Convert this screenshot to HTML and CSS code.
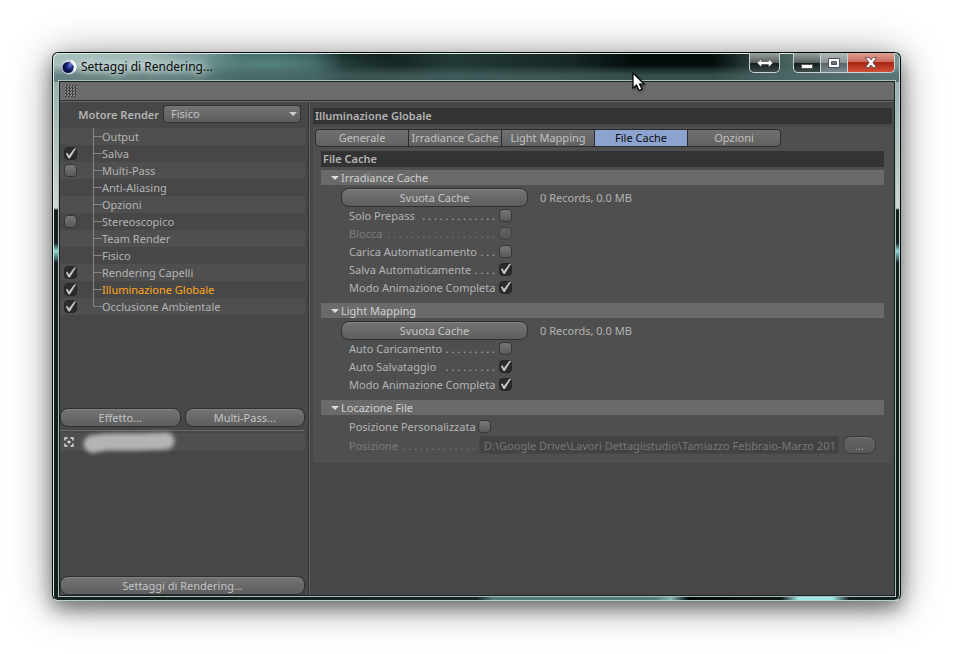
FILE: index.html
```html
<!DOCTYPE html>
<html lang="it">
<head>
  <meta charset="UTF-8" />
  <meta name="viewport" content="width=device-width, initial-scale=1" />
  <title>Settaggi di Rendering...</title>
  <link rel="stylesheet" href="styles.css">
</head>
<body>
  <div class="window">
    <header class="titlebar">
      <svg class="app-icon" viewBox="0 0 16 16" aria-hidden="true">
        <defs>
          <radialGradient id="ball" cx="0.6" cy="0.35" r="0.7">
            <stop offset="0" stop-color="#6f86e0" />
            <stop offset="0.4" stop-color="#26348f" />
            <stop offset="1" stop-color="#070a33" />
          </radialGradient>
        </defs>
        <circle cx="8" cy="8" r="7.5" fill="#c9d0de" />
        <path d="M10 0.800A7.500 7.500 0 0 1 14 12.500L11 10Z" fill="#f4f6fa" />
        <circle cx="7" cy="8.500" r="5.500" fill="#0c1148" />
        <circle cx="8" cy="8" r="4.500" fill="url(#ball)" />
        <path d="M8 4.500Q11.500 3.500 12.500 6.500Q10.500 5 8 4.500Z" fill="#dfe6ff" />
      </svg>
      <h1 class="title">Settaggi di Rendering...</h1>
      <div class="window-buttons">
        <button class="win-btn resize" aria-label="Ridimensiona">
          <svg width="18" height="10" viewBox="0 0 18 10"><path d="M1 5L5.500 1V3.500H12.500V1L17 5L12.500 9V6.500H5.500V9Z" fill="#fff" stroke="#444" stroke-width="0.6" /></svg>
        </button>
        <div class="win-group">
          <button class="win-btn minimize" aria-label="Riduci a icona">
            <svg width="12" height="12" viewBox="0 0 12 12"><rect x="0.500" y="7.500" width="11" height="4" fill="#fff" stroke="#555" /></svg>
          </button>
          <button class="win-btn maximize" aria-label="Ingrandisci">
            <svg width="12" height="10" viewBox="0 0 12 10"><path d="M0.500 0.500H11.500V9.500H0.500ZM3.500 3.500V6.500H8.500V3.500Z" fill="#fff" fill-rule="evenodd" stroke="#4b505c" /></svg>
          </button>
          <button class="win-btn close" aria-label="Chiudi">
            <svg width="12" height="11" viewBox="0 0 12 11"><path d="M0.500 0.500H4L6 3L8 0.500H11.500L8 5.500L11.500 10.500H8L6 8L4 10.500H0.500L4 5.500Z" fill="#fff" stroke="#5a4545" stroke-width="0.8" /></svg>
          </button>
        </div>
      </div>
    </header>

    <main class="content">
      <div class="toolbar">
        <div class="grip"></div>
      </div>

      <div class="columns">
        <aside class="sidebar">
          <div class="engine">
            <label for="engine">Motore Render</label>
            <div class="select-wrap">
              <select id="engine">
                <option>Fisico</option>
              </select>
            </div>
          </div>

          <ul class="tree">
            <li><span class="state"></span><span class="name">Output</span></li>
            <li><span class="state"><input type="checkbox" id="salva" checked></span><label class="name" for="salva">Salva</label></li>
            <li><span class="state"><input type="checkbox" id="multipass"></span><label class="name" for="multipass">Multi-Pass</label></li>
            <li><span class="state"></span><span class="name">Anti-Aliasing</span></li>
            <li><span class="state"></span><span class="name">Opzioni</span></li>
            <li><span class="state"><input type="checkbox" id="stereo"></span><label class="name" for="stereo">Stereoscopico</label></li>
            <li><span class="state"></span><span class="name">Team Render</span></li>
            <li><span class="state"></span><span class="name">Fisico</span></li>
            <li><span class="state"><input type="checkbox" id="capelli" checked></span><label class="name" for="capelli">Rendering Capelli</label></li>
            <li class="selected"><span class="state"><input type="checkbox" id="gi" checked></span><label class="name" for="gi">Illuminazione Globale</label></li>
            <li><span class="state"><input type="checkbox" id="ao" checked></span><label class="name" for="ao">Occlusione Ambientale</label></li>
          </ul>

          <div class="side-buttons">
            <button class="pill">Effetto...</button>
            <button class="pill">Multi-Pass...</button>
          </div>

          <div class="presets">
            <div class="preset">
              <svg width="10" height="10" viewBox="0 0 10 10" aria-hidden="true"><path d="M1 3.500V1H3.500M6.500 1H9V3.500M9 6.500V9H6.500M3.500 9H1V6.500M5 3.500V6.500M3.500 5H6.500" fill="none" stroke="#e6e6e6" stroke-width="1.300" /></svg>
              <svg class="smudge" width="106" height="28" viewBox="0 0 106 28" aria-hidden="true">
                <path d="M16 16L30 14L60 14L90 13" fill="none" stroke="#b4b4b4" stroke-width="17" stroke-linecap="round" stroke-linejoin="round" />
                <circle cx="17" cy="18" r="7" fill="#b4b4b4" />
              </svg>
            </div>
          </div>

          <button class="pill">Settaggi di Rendering...</button>
        </aside>

        <section class="settings">
          <h2 class="bar">Illuminazione Globale</h2>

          <div class="panel">
            <div class="tabs" role="tablist">
              <button role="tab" aria-selected="false">Generale</button>
              <button role="tab" aria-selected="false">Irradiance Cache</button>
              <button role="tab" aria-selected="false">Light Mapping</button>
              <button role="tab" aria-selected="true">File Cache</button>
              <button role="tab" aria-selected="false">Opzioni</button>
            </div>

            <div class="groups">
              <h3 class="bar">File Cache</h3>

              <details open>
                <summary>Irradiance Cache</summary>
                <div class="action">
                  <button class="pill">Svuota Cache</button>
                  <span>0 Records, 0.0 MB</span>
                </div>
                <div class="field">
                  <label for="prepass">Solo Prepass</label>
                  <span class="leader">. . . . . . . . . . . . .</span>
                  <input type="checkbox" id="prepass">
                </div>
                <div class="field disabled">
                  <label for="blocca">Blocca</label>
                  <span class="leader">. . . . . . . . . . . . . . . . . . .</span>
                  <input type="checkbox" id="blocca" disabled>
                </div>
                <div class="field">
                  <label for="carica">Carica Automaticamento</label>
                  <span class="leader">. . .</span>
                  <input type="checkbox" id="carica">
                </div>
                <div class="field">
                  <label for="salva-auto">Salva Automaticamente</label>
                  <span class="leader">. . . .</span>
                  <input type="checkbox" id="salva-auto" checked>
                </div>
                <div class="field">
                  <label for="modo-ic">Modo Animazione Completa</label>
                  <input type="checkbox" id="modo-ic" checked>
                </div>
              </details>

              <details open>
                <summary>Light Mapping</summary>
                <div class="action">
                  <button class="pill">Svuota Cache</button>
                  <span>0 Records, 0.0 MB</span>
                </div>
                <div class="field">
                  <label for="auto-car">Auto Caricamento</label>
                  <span class="leader">. . . . . . . . .</span>
                  <input type="checkbox" id="auto-car">
                </div>
                <div class="field">
                  <label for="auto-salv">Auto Salvataggio</label>
                  <span class="leader">. . . . . . . . .</span>
                  <input type="checkbox" id="auto-salv" checked>
                </div>
                <div class="field">
                  <label for="modo-lm">Modo Animazione Completa</label>
                  <input type="checkbox" id="modo-lm" checked>
                </div>
              </details>

              <details open>
                <summary>Locazione File</summary>
                <div class="field location first">
                  <label for="pos-custom">Posizione Personalizzata</label>
                  <input type="checkbox" id="pos-custom">
                </div>
                <div class="path-row disabled">
                  <div class="field location">
                    <label for="path">Posizione</label>
                    <span class="leader">. . . . . . . . . . . . .</span>
                  </div>
                  <input type="text" id="path" disabled value="D:\Google Drive\Lavori Dettaglistudio\Tamiazzo Febbraio-Marzo 2016">
                  <button class="pill browse" disabled>...</button>
                </div>
              </details>
            </div>
          </div>
        </section>
      </div>
    </main>

    <svg class="cursor" width="14" height="21" viewBox="0 0 14 21" aria-hidden="true">
      <path d="M1 1V16L4.500 13L7 18.500L10 17L7.500 12H12Z" fill="#fff" stroke="#000" stroke-width="1.200" />
    </svg>
  </div>
</body>
</html>
```

FILE: styles.css
```css
* {
  box-sizing: border-box;
}
body {
  margin: 0;
  min-height: 100vh;
  padding: 52px 53px 53px 52px;
  display: flex;
  background: #fff;
  color: #b4b4b4;
  font-family: "Noto Sans", "Open Sans", sans-serif;
  font-size: 11px;
  line-height: 17px;
}
h1, h2, h3, ul {
  margin: 0;
  padding: 0;
  font-size: inherit;
}
button, select, input {
  font: inherit;
  color: inherit;
  margin: 0;
}

/* Glass window frame */
.window {
  position: relative;
  flex: 1;
  min-width: 0;
  display: flex;
  flex-direction: column;
  padding: 0 5px 4px 6px;
  border: 1px solid #050b0b;
  border-bottom-color: #b9cfcd;
  border-radius: 6px;
  background:
    linear-gradient(rgba(75, 105, 103, 0) 12px, rgba(75, 105, 103, 0.7) 22px) top / 100% 29px no-repeat,
    radial-gradient(ellipse 130px 22px at 215px 12px, rgba(92, 142, 138, 0.8), rgba(92, 142, 138, 0) 100%) top / 100% 29px no-repeat,
    linear-gradient(90deg, #a9c0be 0, #9db6b4 100px, #7d9c99 150px, #3f5f5d 190px, #2c4c4a 260px, #071413 290px, #233936 400px, #152624 520px, #030d0c 580px, #030d0c 660px, #3f5856 720px, #4a6462 740px, #7c9694 100%) top / 100% 29px no-repeat,
    linear-gradient(90deg, #14201f 0, #162625 50%, #527c79 52%, #527c79 71%, #7fb5b1 73%, #030b0b 75%, #111a19 86%, #9fe9e4 88%, #9fe9e4 92%, #111f1e 94%) bottom / 100% 6px no-repeat,
    linear-gradient(#8fa9a7 0, #b5c5c4 100px, #cfd6d6 155px, #14201f 157px, #14201f 190px, #8fdcd8 198px, #14201f 210px, #10201f 100%);
  box-shadow:
    inset 1px 1px 0 #dfecea,
    inset -1px 0 0 #c3d5d3,
    0 8px 18px rgba(0, 0, 0, 0.4),
    0 4px 42px rgba(0, 0, 0, 0.4);
}
.titlebar {
  display: flex;
  align-items: flex-start;
  height: 28px;
  padding-left: 2px;
}
.app-icon {
  width: 16px;
  height: 16px;
  margin-top: 6px;
}
.title {
  flex: 1;
  margin: 5px 0 0 4px;
  color: #0a0a0a;
  font-size: 12px;
  font-weight: 400;
  text-shadow: 0 0 6px #d5e3e1, 0 0 10px #d5e3e1, 0 0 14px #d5e3e1;
}
.window-buttons {
  display: flex;
  gap: 13px;
}
.win-group {
  display: flex;
}
.win-btn {
  display: flex;
  align-items: center;
  justify-content: center;
  width: 28px;
  height: 20px;
  padding: 0;
  border: 1px solid #c8d3d3;
  border-top: 0;
  background: linear-gradient(#9ba5a4 0, #59605f 50%, #101918 51%, #3d4b4a 100%);
}
.resize {
  width: 31px;
  border-radius: 0 0 5px 5px;
}
.minimize {
  border-radius: 0 0 0 5px;
}
.maximize {
  width: 27px;
  border-left: 0;
  background: linear-gradient(#b0b8b8 0, #8b9494 50%, #56615f 51%, #7a8890 100%);
}
.close {
  width: 47px;
  border-left: 0;
  border-radius: 0 0 5px 0;
  background: linear-gradient(#dba295 0, #c9695b 48%, #a92413 50%, #cf5135 100%);
}

/* Client area */
.content {
  flex: 1;
  display: flex;
  flex-direction: column;
  border: 1px solid #1b2424;
  outline: 1px solid #a9bdbb;
  background: #474747;
}
.toolbar {
  height: 19px;
  padding: 3px 5px;
  border-bottom: 1px solid #303030;
  background: #6b6b6b;
}
.grip {
  width: 12px;
  height: 12px;
  background: repeating-conic-gradient(#3d3d3d 0 25%, #8b8b8b 0 50%) 0 0 / 3px 3px;
}
.columns {
  flex: 1;
  display: flex;
  border-top: 1px solid #646464;
}

/* Left column */
.sidebar {
  width: 249px;
  display: flex;
  flex-direction: column;
  padding: 3px 3px 0 0;
  border-right: 1px solid #333;
}
.engine {
  display: flex;
  align-items: center;
  justify-content: flex-end;
  gap: 4px;
  padding-right: 4px;
  margin-bottom: 5px;
  font-weight: 600;
}
.select-wrap {
  position: relative;
  width: 138px;
  height: 18px;
  font-weight: 400;
}
.select-wrap::after {
  content: "";
  position: absolute;
  right: 4px;
  top: 7px;
  border: 4px solid transparent;
  border-top-color: #ccc;
  border-bottom: 0;
  pointer-events: none;
}
select {
  display: block;
  appearance: none;
  width: 100%;
  height: 18px;
  padding: 0 7px;
  border: 1px solid #323232;
  border-radius: 4px;
  background: linear-gradient(#757575, #5c5c5c);
  color: #c4c4c4;
  line-height: 16px;
}
.tree {
  list-style: none;
}
.tree li {
  display: flex;
  height: 17px;
  background: #474747;
}
.tree li:nth-child(odd) {
  background: #4f4f4f;
}
.state {
  width: 33px;
  padding: 2px 4px;
}
.name {
  display: flex;
}
.name::before {
  content: "";
  width: 9px;
  height: 17px;
  background:
    linear-gradient(#858585, #858585) 0 8px / 9px 1px no-repeat,
    linear-gradient(#858585, #858585) 0 0 / 1px 17px no-repeat;
}
.tree li:last-child .name::before {
  height: 9px;
}
.selected .name {
  color: #ffa81c;
}
.side-buttons {
  display: flex;
  gap: 4px;
  margin-top: auto;
}
.side-buttons .pill {
  flex: 1;
}
.presets {
  height: 143px;
  margin: 3px 0;
  padding-top: 2px;
  border-top: 1px solid #686868;
}
.preset {
  display: flex;
  align-items: center;
  gap: 2px;
  height: 18px;
  padding-left: 4px;
  background: #4f4f4f;
}
.smudge {
  flex: none;
  filter: blur(2px);
}
.pill {
  height: 19px;
  padding: 0 8px;
  border: 1px solid #2f2f2f;
  border-radius: 8px;
  background: linear-gradient(#747474, #5e5e5e);
  box-shadow: inset 0 1px 0 #828282;
  color: #c4c4c4;
  line-height: 17px;
}

/* Check boxes */
input[type="checkbox"] {
  appearance: none;
  display: block;
  flex: none;
  width: 13px;
  height: 13px;
  border: 1px solid #363636;
  border-radius: 4px;
  background: linear-gradient(#777, #5a5a5a);
}
input[type="checkbox"]:checked {
  border-color: #262626;
  background: #2b2b2b;
}
input[type="checkbox"]:checked::before {
  content: "";
  display: block;
  width: 11px;
  height: 11px;
  background: #c6c6c6;
  clip-path: polygon(8% 52%, 22% 44%, 36% 68%, 84% 4%, 100% 4%, 44% 96%, 32% 96%);
}
input[type="checkbox"]:disabled {
  opacity: 0.5;
}

/* Right column */
.settings {
  flex: 1;
  min-width: 0;
  padding: 6px 2px 0 3px;
  border-left: 1px solid #636363;
}
.bar {
  height: 16px;
  padding-left: 2px;
  background: #333;
  font-weight: 600;
  line-height: 16px;
}
.panel {
  margin-top: 3px;
  padding: 2px 0 8px;
  background: #4f4f4f;
}
.tabs {
  display: flex;
  margin-left: 2px;
}
.tabs button {
  width: 94px;
  height: 18px;
  margin-right: -1px;
  padding: 0;
  border: 1px solid #2c2c2c;
  background: linear-gradient(#707070, #626262);
  color: #c0c0c0;
  line-height: 16px;
  white-space: nowrap;
}
.tabs button:first-child {
  border-radius: 4px 0 0 4px;
}
.tabs button:last-child {
  border-radius: 0 4px 4px 0;
}
.tabs button[aria-selected="true"] {
  background: #8ca3cf;
  color: #0c0c0c;
}
.groups {
  padding: 4px 8px 0;
}
details {
  margin-top: 3px;
}
details + details {
  margin-top: 7px;
}
summary {
  display: flex;
  align-items: center;
  gap: 2px;
  height: 15px;
  padding-left: 10px;
  background: #6a6a6a;
  color: #d0d0d0;
}
summary::before {
  content: "";
  border: 4px solid transparent;
  border-top-color: #ddd;
  border-bottom: 0;
}
.action {
  display: flex;
  align-items: center;
  gap: 12px;
  height: 18px;
  margin: 3px 0 0 20px;
}
.action .pill {
  width: 187px;
}
.field {
  display: flex;
  align-items: center;
  width: 163px;
  height: 18px;
  margin-left: 28px;
  white-space: nowrap;
}
.field input {
  margin-left: auto;
}
.leader {
  flex: 1;
  margin-right: 4px;
  text-align: right;
  overflow: hidden;
}
.location {
  width: 142px;
}
.first {
  margin-top: 2px;
}
.path-row {
  display: flex;
  align-items: center;
  height: 20px;
}
.path-row .field {
  width: 130px;
  flex: none;
}
.path-row input {
  flex: 1;
  min-width: 0;
  height: 18px;
  padding: 0 2px 0 4px;
  border: 1px solid #474747;
  border-radius: 2px;
  background: #434343;
  color: #777;
}
.browse {
  width: 33px;
  height: 18px;
  margin: 0 8px 0 4px;
  opacity: 0.6;
}
.disabled {
  color: #7c7c7c;
}

.cursor {
  position: absolute;
  left: 579px;
  top: 19px;
  filter: drop-shadow(1px 1px 1px rgba(0, 0, 0, 0.5));
}
```
